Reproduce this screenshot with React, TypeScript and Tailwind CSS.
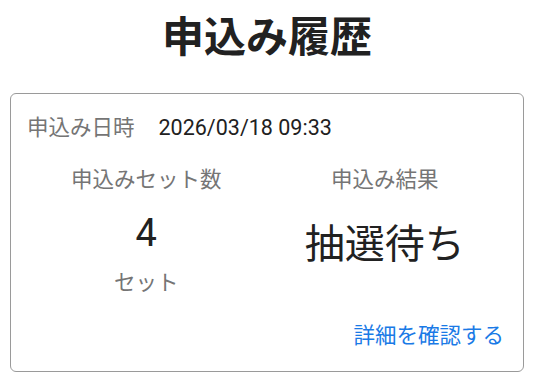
import React from "react";

export default function App() {
  return (
    <div
      className="w-[534px] h-[380px] bg-white overflow-hidden"
      style={{ fontFamily: 'Roboto, "Noto Sans CJK JP", sans-serif' }}
    >
      <h1 className="text-center text-[42px] leading-[56px] font-semibold text-[#212121] mt-[10px]">
        申込み履歴
      </h1>
      <div className="mx-[10px] mt-[27px] border border-[#9a9a9a] rounded-[6px] pl-[16px] pr-[19px] pt-[19px] pb-[20px]">
        <div className="flex items-center text-[21.5px] leading-[30px]">
          <span className="text-[#757575]">申込み日時</span>
          <span className="ml-[24px] text-[#212121]">2026/03/18 09:33</span>
        </div>
        <div className="grid grid-cols-2 mt-[22px]">
          <div className="flex flex-col items-center">
            <div className="text-[21.5px] leading-[30px] text-[#757575]">申込みセット数</div>
            <div className="text-[38px] leading-[48px] text-[#212121] mt-[14px]">4</div>
            <div className="text-[21.5px] leading-[30px] text-[#757575] mt-[11px]">セット</div>
          </div>
          <div className="flex flex-col items-center">
            <div className="text-[21.5px] leading-[30px] text-[#757575]">申込み結果</div>
            <div className="text-[40px] leading-[56px] text-[#212121] mt-[22px]">抽選待ち</div>
          </div>
        </div>
        <div className="flex justify-end mt-[23px]">
          <span className="text-[21.5px] leading-[30px] text-[#1a7ae6]">詳細を確認する</span>
        </div>
      </div>
    </div>
  );
}
